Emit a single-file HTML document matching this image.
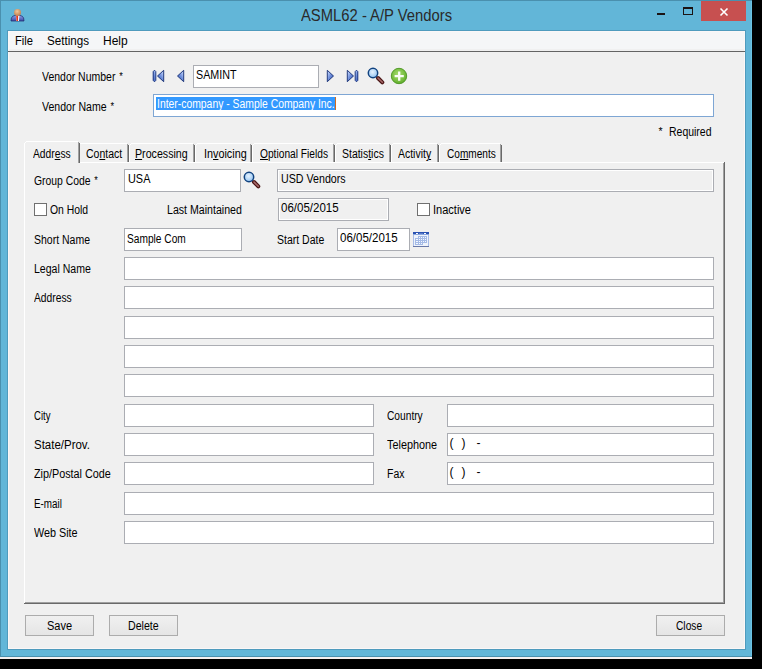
<!DOCTYPE html>
<html><head><meta charset="utf-8"><style>
*{margin:0;padding:0;box-sizing:border-box}
html,body{width:762px;height:669px;overflow:hidden;background:#000}
body{position:relative;font-family:"Liberation Sans",sans-serif}
.a{position:absolute}
.t{position:absolute;font-size:12px;line-height:14px;white-space:nowrap;color:#000;transform-origin:0 0}
.m{position:absolute;font-size:12px;line-height:14px;white-space:nowrap;color:#000}
.ast{display:inline-block;position:relative;top:-1px;font-size:10.5px;margin-left:1px}
.tb{position:absolute;background:#fff;border:1px solid #abadb3}
.ro{position:absolute;background:#f0f0f0;border:1px solid #abadb3;box-shadow:inset 0 0 0 1px #fff}
.cb{position:absolute;width:13px;height:13px;background:#fff;border:1px solid #707070}
.btn{position:absolute;height:21px;border:1px solid #acacac;background:linear-gradient(#f0f0f0,#e5e5e5)}
</style></head><body>
<div class="a" style="left:0px;top:0px;width:752px;height:657px;background:#62b6d8;"></div>
<div class="a" style="left:0px;top:0px;width:752px;height:1px;background:#4a90ae;"></div>
<div class="a" style="left:0px;top:0px;width:1px;height:657px;background:#4a90ae;"></div>
<div class="a" style="left:751px;top:1px;width:1px;height:656px;background:#6cc2e2;"></div>
<div class="a" style="left:0px;top:656px;width:752px;height:1px;background:#4a90ae;"></div>
<div class="a" style="left:0px;top:657px;width:752px;height:2px;background:#f4f0f0;"></div>
<div class="a" style="left:7px;top:30px;width:739px;height:620px;background:#4f9bbd;"></div>
<div class="a" style="left:8px;top:31px;width:737px;height:618px;background:#f0f0f0;border:1px solid #fbf7f7"></div>
<div class="a" style="left:9px;top:32px;width:735px;height:17px;background:#f5f6f7;"></div>
<div class="a" style="left:9px;top:49px;width:735px;height:2px;background:#f0f0f0;"></div>
<div class="a" style="left:8px;top:51px;width:737px;height:1px;background:#646464;"></div>
<svg class="a" style="left:10px;top:8px" width="16" height="15" viewBox="0 0 16 15">
  <defs>
    <radialGradient id="hg" cx="0.45" cy="0.35" r="0.7"><stop offset="0" stop-color="#f0c898"/><stop offset="1" stop-color="#c07848"/></radialGradient>
    <linearGradient id="sg" x1="0" y1="0" x2="0" y2="1"><stop offset="0" stop-color="#8ea0e8"/><stop offset="1" stop-color="#3a4aa8"/></linearGradient>
  </defs>
  <path d="M1 13 L1.4 10 Q2.2 7.8 5 7.4 L10 7.4 Q12.8 7.8 13.6 10 L14 13 Z" fill="url(#sg)" stroke="#1c2868" stroke-width="0.7"/>
  <path d="M6 7.6 L9.4 7.6 L9 13 L6.4 13 Z" fill="#f4f4f8"/>
  <path d="M6.2 7.8 L8.1 7.8 L8 13 L6.5 13 Z" fill="#e8381c"/>
  <ellipse cx="7.5" cy="4.4" rx="3.5" ry="3.4" fill="url(#hg)"/>
</svg>
<div class="a" style="left:300.5px;top:7px;font-size:16px;line-height:18px;color:#2a2a2a;white-space:nowrap;transform-origin:0 0;transform:scaleX(0.925)">ASML62 - A/P Vendors</div>
<div class="a" style="left:657px;top:13px;width:8px;height:2px;background:#1b1414;"></div>
<div class="a" style="left:683px;top:7px;width:10px;height:8px;border:1px solid #1b1414;border-top-width:2px"></div>
<div class="a" style="left:701px;top:1px;width:45px;height:20px;background:#c75050;"></div>
<svg class="a" style="left:719px;top:7px" width="10" height="10" viewBox="0 0 10 10"><path d="M1.5 1.5 L8.5 8.5 M8.5 1.5 L1.5 8.5" stroke="#fff" stroke-width="1.6"/></svg>
<div class="m" style="left:15px;top:34px;transform-origin:0 0;transform:scaleX(0.93)">File</div>
<div class="m" style="left:47px;top:34px;transform-origin:0 0;transform:scaleX(0.97)">Settings</div>
<div class="m" style="left:103px;top:34px">Help</div>
<div class="t" style="left:41.5px;top:70px;transform:scaleX(0.873);">Vendor Number <span class="ast">*</span></div>
<div class="t" style="left:41.5px;top:100px;transform:scaleX(0.881);">Vendor Name <span class="ast">*</span></div>
<div class="tb" style="left:193px;top:65px;width:126px;height:23px;"></div>
<div class="t" style="left:195.5px;top:68px;transform:scaleX(0.895);">SAMINT</div>
<div class="tb" style="left:153px;top:94px;width:561px;height:23px;border-color:#7ea6d4"></div>
<div class="a" style="left:156px;top:97px;width:179px;height:13px;background:#3399ff;"></div>
<div class="t" style="left:156.5px;top:97px;transform:scaleX(0.865);color:#fff">Inter-company - Sample Company Inc.</div>
<div class="a" style="left:335px;top:97px;width:1px;height:13px;background:#d06a20;"></div>
<div class="t" style="left:657.5px;top:125px;transform:scaleX(1);"><span class="ast">*</span></div>
<div class="t" style="left:668.5px;top:125px;transform:scaleX(0.872);">Required</div>
<svg class="a" style="left:150px;top:66px" width="40" height="20" viewBox="0 0 40 20">
  <defs>
    <linearGradient id="ag" x1="0.9" y1="0.1" x2="0.1" y2="0.9"><stop offset="0" stop-color="#c4d6fa"/><stop offset="0.5" stop-color="#6c8cda"/><stop offset="1" stop-color="#3a5ab4"/></linearGradient>
    <linearGradient id="ag2" x1="0.1" y1="0.1" x2="0.9" y2="0.9"><stop offset="0" stop-color="#c4d6fa"/><stop offset="0.5" stop-color="#6c8cda"/><stop offset="1" stop-color="#3a5ab4"/></linearGradient>
  </defs>
  <path d="M4.5 4.2 L5.8 5.6 L5.8 14.4 L4.5 15.8 L3.2 14.4 L3.2 5.6 Z" fill="url(#ag)" stroke="#1b3680" stroke-width="1" stroke-linejoin="round"/>
  <path d="M7.5 10 L13.7 4.3 L13.7 15.7 Z" fill="url(#ag)" stroke="#1a3478" stroke-width="0.95" stroke-linejoin="round"/>
  <path d="M27.5 10 L33.7 4.3 L33.7 15.7 Z" fill="url(#ag)" stroke="#1a3478" stroke-width="0.95" stroke-linejoin="round"/>
</svg>
<svg class="a" style="left:322px;top:64px" width="40" height="24" viewBox="0 0 40 24">
  <path d="M34.5 6.2 L35.8 7.6 L35.8 16.4 L34.5 17.8 L33.2 16.4 L33.2 7.6 Z" fill="url(#ag2)" stroke="#1b3680" stroke-width="1" stroke-linejoin="round"/>
  <path d="M11.5 12 L5.3 6.3 L5.3 17.7 Z" fill="url(#ag2)" stroke="#1a3478" stroke-width="0.95" stroke-linejoin="round"/>
  <path d="M31.5 12 L25.3 6.3 L25.3 17.7 Z" fill="url(#ag2)" stroke="#1a3478" stroke-width="0.95" stroke-linejoin="round"/>
</svg>
<svg width="0" height="0" style="position:absolute">
<defs>
<radialGradient id="lg2" cx="0.45" cy="0.4" r="0.65"><stop offset="0" stop-color="#e6f2ff"/><stop offset="0.7" stop-color="#a8d0f6"/><stop offset="1" stop-color="#6aa4e0"/></radialGradient>
<radialGradient id="gg" cx="0.45" cy="0.4" r="0.65"><stop offset="0" stop-color="#a6dc70"/><stop offset="0.7" stop-color="#74bc3c"/><stop offset="1" stop-color="#58a428"/></radialGradient>
<g id="mag">
  <path d="M11 11 L15.3 15.3" stroke="#4a1414" stroke-width="4" stroke-linecap="round"/>
  <path d="M11 11 L15.3 15.3" stroke="#a86a6a" stroke-width="1.6" stroke-linecap="round"/>
  <circle cx="6" cy="6" r="4.7" fill="url(#lg2)" stroke="#11427f" stroke-width="1.5"/>
</g>
<g id="cal">
  <rect x="0" y="0" width="16" height="15" fill="#eef3fb"/>
  <rect x="0" y="2" width="1" height="12" fill="#a8bce8"/>
  <rect x="15" y="2" width="1" height="12" fill="#a8bce8"/>
  <rect x="0" y="0" width="16" height="2" fill="#2a52b2"/>
  <rect x="0" y="2" width="16" height="1" fill="#8aa6dc"/>
  <rect x="3" y="1" width="2" height="1" fill="#fff"/>
  <rect x="11" y="1" width="2" height="1" fill="#fff"/>
  <rect x="6" y="1" width="4" height="1" fill="#5a7cc8"/>
  <path d="M5 4 H14 V11 H10 V13 H2 V6 H5 Z" fill="#a4bae6"/>
  <rect x="6" y="5" width="1" height="1" fill="#f4f8ff"/><rect x="8" y="5" width="1" height="1" fill="#f4f8ff"/><rect x="10" y="5" width="1" height="1" fill="#f4f8ff"/><rect x="12" y="5" width="1" height="1" fill="#f4f8ff"/><rect x="3" y="7" width="1" height="1" fill="#f4f8ff"/><rect x="4" y="7" width="1" height="1" fill="#f4f8ff"/><rect x="6" y="7" width="1" height="1" fill="#f4f8ff"/><rect x="8" y="7" width="1" height="1" fill="#f4f8ff"/><rect x="10" y="7" width="1" height="1" fill="#f4f8ff"/><rect x="12" y="7" width="1" height="1" fill="#f4f8ff"/><rect x="3" y="9" width="1" height="1" fill="#f4f8ff"/><rect x="4" y="9" width="1" height="1" fill="#f4f8ff"/><rect x="6" y="9" width="1" height="1" fill="#f4f8ff"/><rect x="8" y="9" width="1" height="1" fill="#f4f8ff"/><rect x="10" y="9" width="1" height="1" fill="#f4f8ff"/><rect x="12" y="9" width="1" height="1" fill="#f4f8ff"/><rect x="3" y="11" width="1" height="1" fill="#f4f8ff"/><rect x="4" y="11" width="1" height="1" fill="#f4f8ff"/><rect x="6" y="11" width="1" height="1" fill="#f4f8ff"/><rect x="8" y="11" width="1" height="1" fill="#f4f8ff"/>
  <rect x="0" y="14" width="16" height="1" fill="#6878a8"/>
</g>
</defs></svg>
<svg class="a" style="left:367px;top:67px" width="18" height="18" viewBox="0 0 18 18"><use href="#mag"/></svg>
<svg class="a" style="left:390px;top:67px" width="18" height="18" viewBox="0 0 18 18">
  <circle cx="9" cy="9" r="7.7" fill="url(#gg)" stroke="#4a9420" stroke-width="0.9"/>
  <path d="M4.6 9.2 L13.8 9.2 M9.2 4.6 L9.2 13.8" stroke="#fff" stroke-width="2.3" opacity="0.95"/>
</svg>
<div class="a" style="left:24px;top:162px;width:701px;height:442px;border-top:1px solid #fff;border-left:1px solid #fff"></div>
<div class="a" style="left:723px;top:163px;width:1px;height:440px;background:#a0a0a0;"></div>
<div class="a" style="left:724px;top:162px;width:1px;height:442px;background:#696969;"></div>
<div class="a" style="left:25px;top:602px;width:699px;height:1px;background:#a0a0a0;"></div>
<div class="a" style="left:24px;top:603px;width:701px;height:1px;background:#696969;"></div>
<div class="a" style="left:24px;top:141px;width:56px;height:23px;background:#f0f0f0;"></div>
<div class="a" style="left:26px;top:141px;width:52px;height:1px;background:#fff;"></div>
<div class="a" style="left:25px;top:142px;width:1px;height:1px;background:#fff;"></div>
<div class="a" style="left:24px;top:143px;width:1px;height:21px;background:#fff;"></div>
<div class="a" style="left:78px;top:142px;width:1px;height:21px;background:#a0a0a0;"></div>
<div class="a" style="left:79px;top:143px;width:1px;height:20px;background:#696969;"></div>
<div class="t" style="left:32.5px;top:147px;transform:scaleX(0.855);">Addr<u>e</u>ss</div>
<div class="a" style="left:80px;top:143px;width:47px;height:1px;background:#fff;"></div>
<div class="a" style="left:127px;top:144px;width:1px;height:18px;background:#a0a0a0;"></div>
<div class="a" style="left:128px;top:145px;width:1px;height:17px;background:#696969;"></div>
<div class="t" style="left:85.5px;top:147px;transform:scaleX(0.874);">Co<u>n</u>tact</div>
<div class="a" style="left:129px;top:145px;width:1px;height:17px;background:#fff;"></div>
<div class="a" style="left:130px;top:144px;width:1px;height:1px;background:#fff;"></div>
<div class="a" style="left:131px;top:143px;width:62px;height:1px;background:#fff;"></div>
<div class="a" style="left:193px;top:144px;width:1px;height:18px;background:#a0a0a0;"></div>
<div class="a" style="left:194px;top:145px;width:1px;height:17px;background:#696969;"></div>
<div class="t" style="left:134.5px;top:147px;transform:scaleX(0.888);"><u>P</u>rocessing</div>
<div class="a" style="left:195px;top:145px;width:1px;height:17px;background:#fff;"></div>
<div class="a" style="left:196px;top:144px;width:1px;height:1px;background:#fff;"></div>
<div class="a" style="left:197px;top:143px;width:53px;height:1px;background:#fff;"></div>
<div class="a" style="left:250px;top:144px;width:1px;height:18px;background:#a0a0a0;"></div>
<div class="a" style="left:251px;top:145px;width:1px;height:17px;background:#696969;"></div>
<div class="t" style="left:203.5px;top:147px;transform:scaleX(0.902);">In<u>v</u>oicing</div>
<div class="a" style="left:252px;top:145px;width:1px;height:17px;background:#fff;"></div>
<div class="a" style="left:253px;top:144px;width:1px;height:1px;background:#fff;"></div>
<div class="a" style="left:254px;top:143px;width:79px;height:1px;background:#fff;"></div>
<div class="a" style="left:333px;top:144px;width:1px;height:18px;background:#a0a0a0;"></div>
<div class="a" style="left:334px;top:145px;width:1px;height:17px;background:#696969;"></div>
<div class="t" style="left:259.5px;top:147px;transform:scaleX(0.85);"><u>O</u>ptional Fields</div>
<div class="a" style="left:335px;top:145px;width:1px;height:17px;background:#fff;"></div>
<div class="a" style="left:336px;top:144px;width:1px;height:1px;background:#fff;"></div>
<div class="a" style="left:337px;top:143px;width:52px;height:1px;background:#fff;"></div>
<div class="a" style="left:389px;top:144px;width:1px;height:18px;background:#a0a0a0;"></div>
<div class="a" style="left:390px;top:145px;width:1px;height:17px;background:#696969;"></div>
<div class="t" style="left:341.5px;top:147px;transform:scaleX(0.872);">Statis<u>t</u>ics</div>
<div class="a" style="left:391px;top:145px;width:1px;height:17px;background:#fff;"></div>
<div class="a" style="left:392px;top:144px;width:1px;height:1px;background:#fff;"></div>
<div class="a" style="left:393px;top:143px;width:44px;height:1px;background:#fff;"></div>
<div class="a" style="left:437px;top:144px;width:1px;height:18px;background:#a0a0a0;"></div>
<div class="a" style="left:438px;top:145px;width:1px;height:17px;background:#696969;"></div>
<div class="t" style="left:397.5px;top:147px;transform:scaleX(0.871);">Activit<u>y</u></div>
<div class="a" style="left:439px;top:145px;width:1px;height:17px;background:#fff;"></div>
<div class="a" style="left:440px;top:144px;width:1px;height:1px;background:#fff;"></div>
<div class="a" style="left:441px;top:143px;width:59px;height:1px;background:#fff;"></div>
<div class="a" style="left:500px;top:144px;width:1px;height:18px;background:#a0a0a0;"></div>
<div class="a" style="left:501px;top:145px;width:1px;height:17px;background:#696969;"></div>
<div class="t" style="left:446.5px;top:147px;transform:scaleX(0.841);">Co<u>m</u>ments</div>
<div class="t" style="left:33.5px;top:174px;transform:scaleX(0.865);">Group Code <span class="ast">*</span></div>
<div class="tb" style="left:124px;top:169px;width:117px;height:23px;"></div>
<div class="t" style="left:127.5px;top:172px;transform:scaleX(0.908);">USA</div>
<svg class="a" style="left:243px;top:171px" width="18" height="18" viewBox="0 0 18 18"><use href="#mag"/></svg>
<div class="ro" style="left:277px;top:169px;width:437px;height:23px;"></div>
<div class="t" style="left:280.5px;top:172px;transform:scaleX(0.889);">USD Vendors</div>
<div class="cb" style="left:34px;top:203px"></div>
<div class="t" style="left:49.5px;top:203px;transform:scaleX(0.866);">On Hold</div>
<div class="t" style="left:167.0px;top:203px;transform:scaleX(0.884);">Last Maintained</div>
<div class="ro" style="left:278px;top:198px;width:111px;height:23px;"></div>
<div class="t" style="left:280.5px;top:201px;transform:scaleX(0.96);">06/05/2015</div>
<div class="cb" style="left:417px;top:203px"></div>
<div class="t" style="left:432.5px;top:203px;transform:scaleX(0.918);">Inactive</div>
<div class="t" style="left:33.5px;top:233px;transform:scaleX(0.875);">Short Name</div>
<div class="tb" style="left:124px;top:228px;width:118px;height:23px;"></div>
<div class="t" style="left:126.5px;top:232px;transform:scaleX(0.847);">Sample Com</div>
<div class="t" style="left:276.5px;top:233px;transform:scaleX(0.874);">Start Date</div>
<div class="tb" style="left:337px;top:228px;width:73px;height:23px;"></div>
<div class="t" style="left:339.5px;top:231px;transform:scaleX(0.96);">06/05/2015</div>
<svg class="a" style="left:413px;top:232px" width="16" height="15" viewBox="0 0 16 15"><use href="#cal"/></svg>
<div class="t" style="left:33.5px;top:262px;transform:scaleX(0.878);">Legal Name</div>
<div class="tb" style="left:124px;top:257px;width:590px;height:23px;"></div>
<div class="t" style="left:33.5px;top:291px;transform:scaleX(0.855);">Address</div>
<div class="tb" style="left:124px;top:286px;width:590px;height:23px;"></div>
<div class="tb" style="left:124px;top:316px;width:590px;height:23px;"></div>
<div class="tb" style="left:124px;top:345px;width:590px;height:23px;"></div>
<div class="tb" style="left:124px;top:374px;width:590px;height:23px;"></div>
<div class="t" style="left:33.5px;top:409px;transform:scaleX(0.795);">City</div>
<div class="tb" style="left:124px;top:404px;width:250px;height:23px;"></div>
<div class="t" style="left:386.5px;top:409px;transform:scaleX(0.85);">Country</div>
<div class="tb" style="left:447px;top:404px;width:267px;height:23px;"></div>
<div class="t" style="left:33.5px;top:438px;transform:scaleX(0.956);">State/Prov.</div>
<div class="tb" style="left:124px;top:433px;width:250px;height:23px;"></div>
<div class="t" style="left:386.5px;top:438px;transform:scaleX(0.905);">Telephone</div>
<div class="tb" style="left:447px;top:433px;width:267px;height:23px;"></div>
<div class="t" style="left:449.5px;top:436px;transform:scaleX(1);">(</div>
<div class="t" style="left:461.5px;top:436px;transform:scaleX(1);">)</div>
<div class="t" style="left:476.5px;top:436px;transform:scaleX(1);">-</div>
<div class="t" style="left:33.5px;top:467px;transform:scaleX(0.9);">Zip/Postal Code</div>
<div class="tb" style="left:124px;top:462px;width:250px;height:23px;"></div>
<div class="t" style="left:386.5px;top:467px;transform:scaleX(0.874);">Fax</div>
<div class="tb" style="left:447px;top:462px;width:267px;height:23px;"></div>
<div class="t" style="left:449.5px;top:465px;transform:scaleX(1);">(</div>
<div class="t" style="left:461.5px;top:465px;transform:scaleX(1);">)</div>
<div class="t" style="left:476.5px;top:465px;transform:scaleX(1);">-</div>
<div class="t" style="left:33.5px;top:497px;transform:scaleX(0.82);">E-mail</div>
<div class="tb" style="left:124px;top:492px;width:590px;height:23px;"></div>
<div class="t" style="left:33.5px;top:526px;transform:scaleX(0.9);">Web Site</div>
<div class="tb" style="left:124px;top:521px;width:590px;height:23px;"></div>
<div class="btn" style="left:25px;top:615px;width:69px"></div>
<div class="t" style="left:46.5px;top:619px;transform:scaleX(0.919);">Save</div>
<div class="btn" style="left:109px;top:615px;width:69px"></div>
<div class="t" style="left:127.5px;top:619px;transform:scaleX(0.885);">Delete</div>
<div class="btn" style="left:656px;top:615px;width:69px"></div>
<div class="t" style="left:675.5px;top:619px;transform:scaleX(0.85);">Close</div>
</body></html>
